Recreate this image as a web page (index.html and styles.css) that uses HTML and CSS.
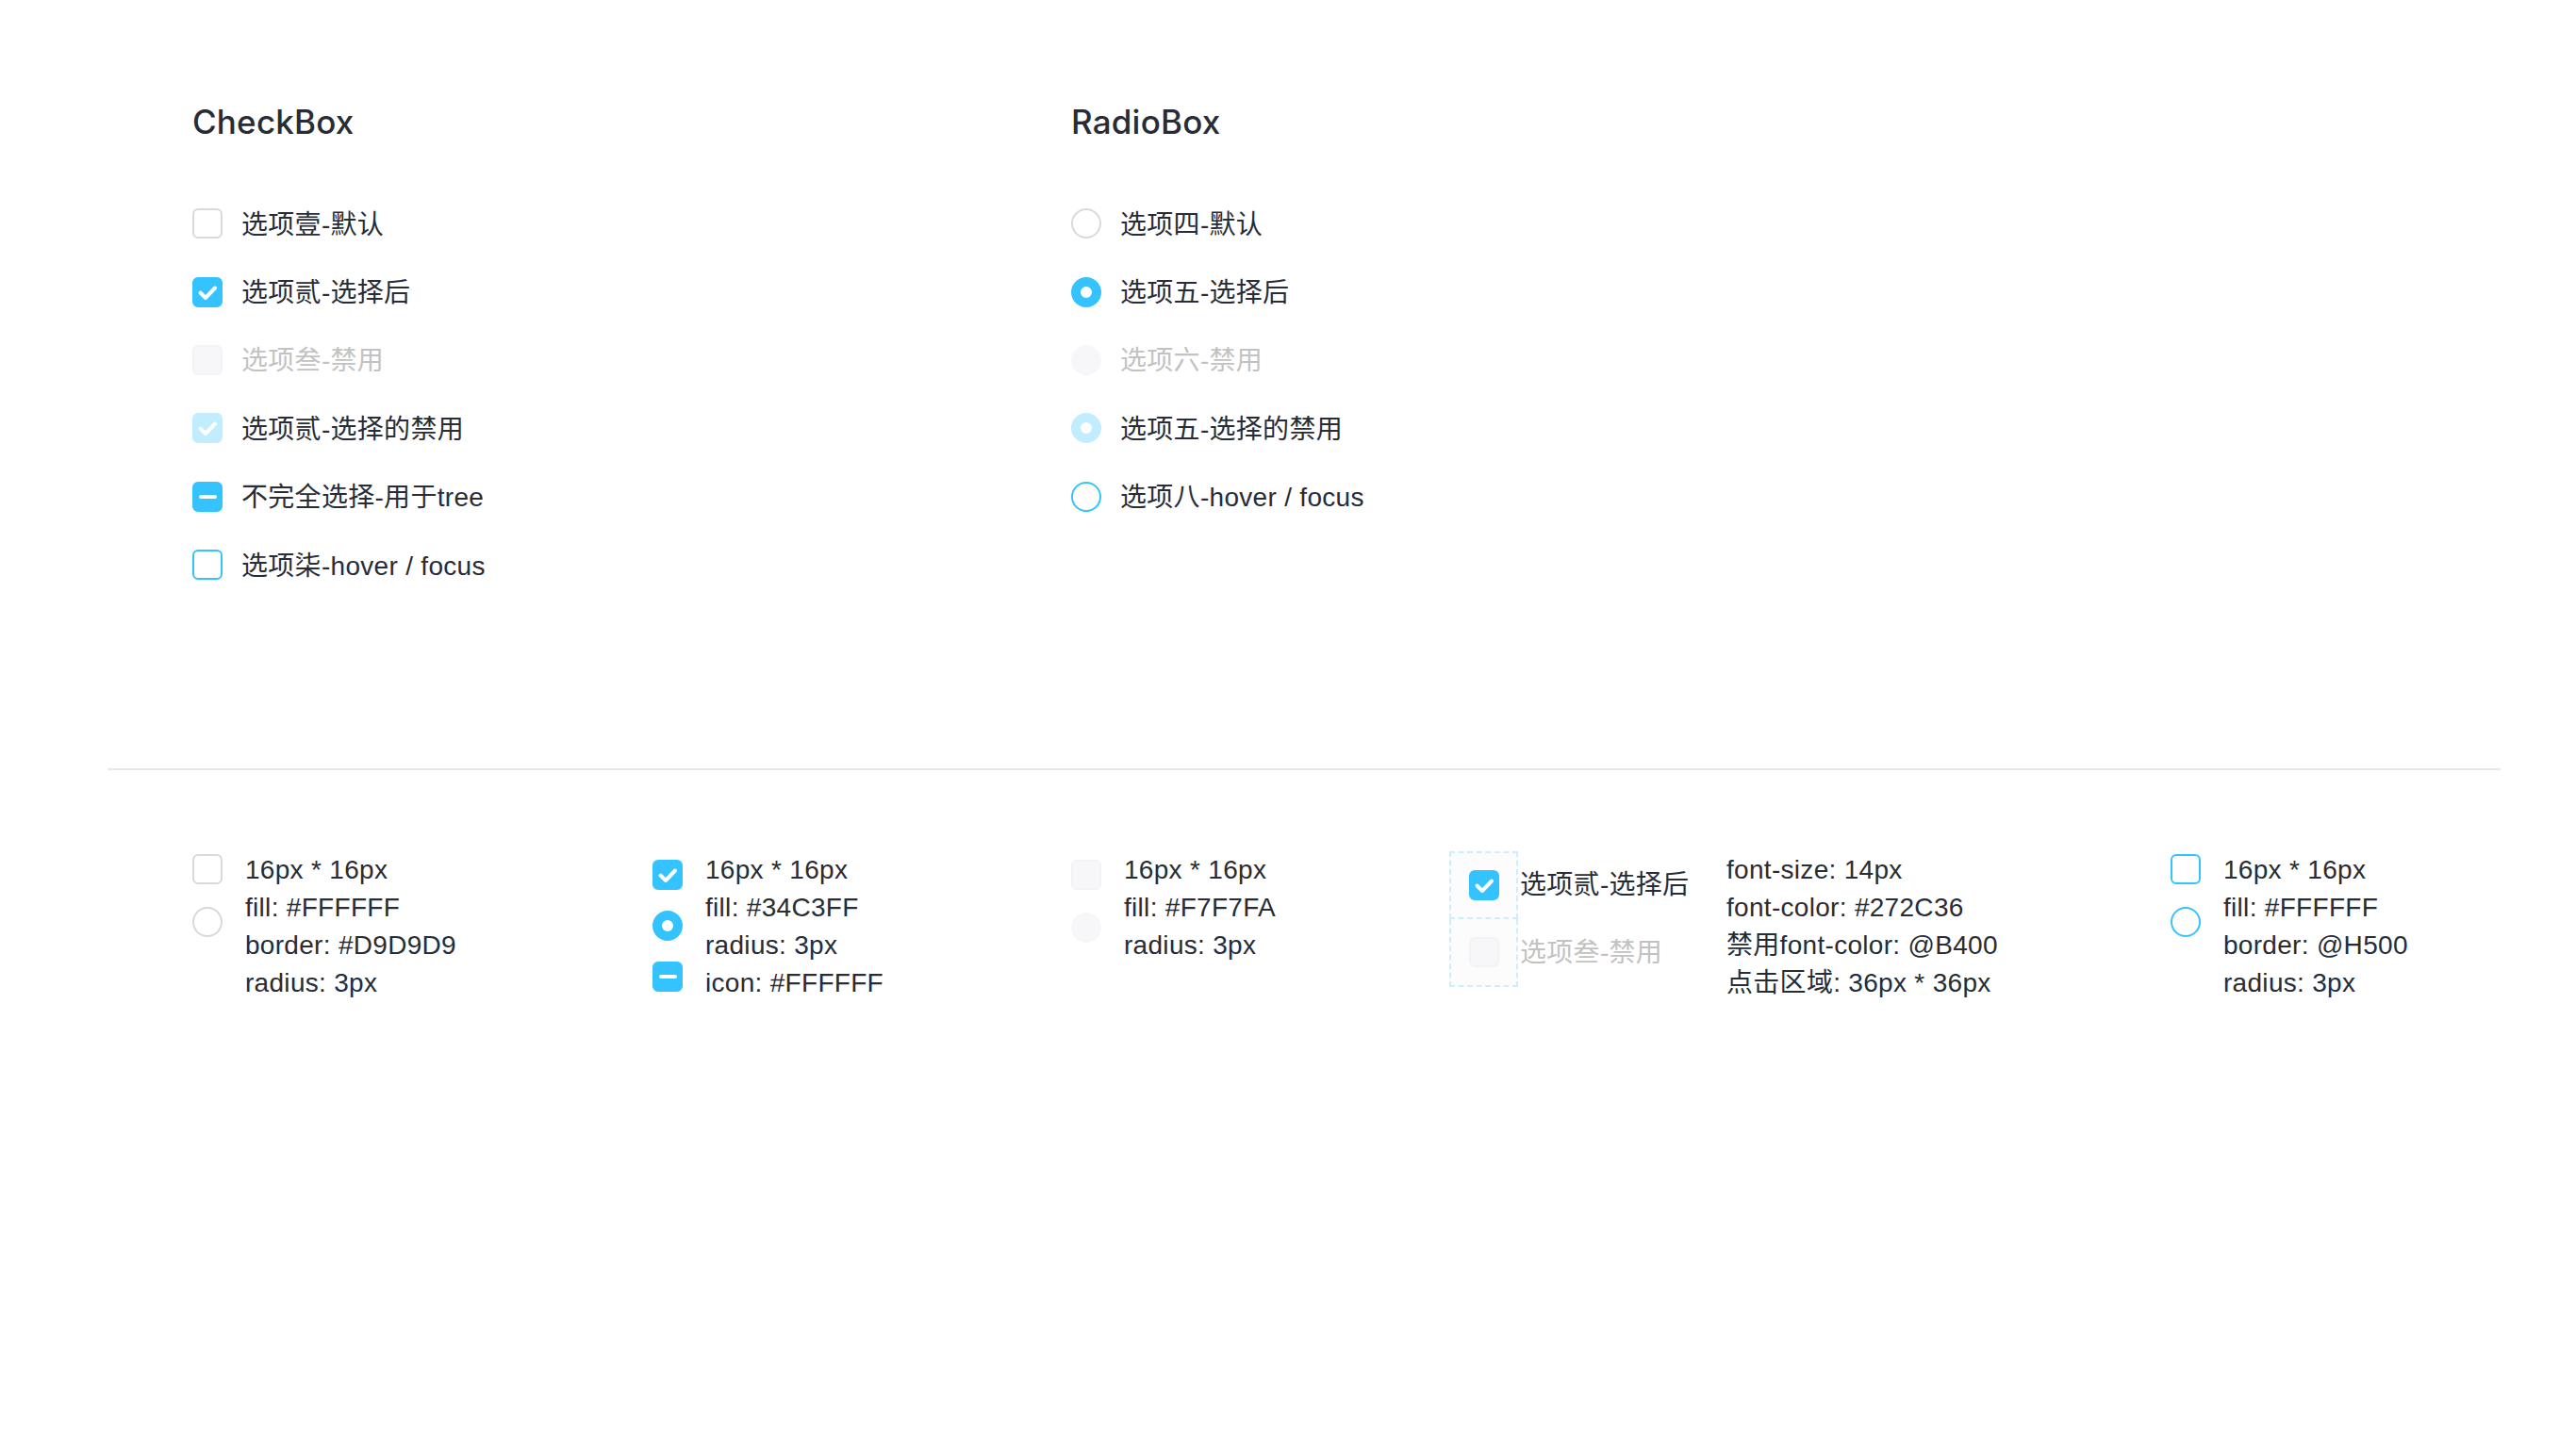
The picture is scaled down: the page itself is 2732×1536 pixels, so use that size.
FILE: index.html
```html
<!DOCTYPE html>
<html lang="zh-CN">
<head>
<meta charset="utf-8">
<title>CheckBox / RadioBox</title>
<link rel="stylesheet" href="styles.css">
</head>
<body>
<div class="page">
  <section class="demos">
    <div class="demo-col demo-col--check">
      <h2 class="title">CheckBox</h2>
      <ul class="options">
        <li class="option"><span class="cb"></span><span class="label">选项壹-默认</span></li>
        <li class="option"><span class="cb cb--checked"><svg class="tick" viewBox="0 0 32 32"><path d="M8.5 16.5 L14 22 L24 11.5"/></svg></span><span class="label">选项贰-选择后</span></li>
        <li class="option"><span class="cb cb--disabled"></span><span class="label label--disabled">选项叁-禁用</span></li>
        <li class="option"><span class="cb cb--checked-disabled"><svg class="tick" viewBox="0 0 32 32"><path d="M8.5 16.5 L14 22 L24 11.5"/></svg></span><span class="label">选项贰-选择的禁用</span></li>
        <li class="option"><span class="cb cb--checked"><span class="minus"></span></span><span class="label">不完全选择-用于tree</span></li>
        <li class="option"><span class="cb cb--hover"></span><span class="label">选项柒-hover / focus</span></li>
      </ul>
    </div>
    <div class="demo-col demo-col--radio">
      <h2 class="title">RadioBox</h2>
      <ul class="options">
        <li class="option"><span class="rd"></span><span class="label">选项四-默认</span></li>
        <li class="option"><span class="rd rd--checked"></span><span class="label">选项五-选择后</span></li>
        <li class="option"><span class="rd rd--disabled"></span><span class="label label--disabled">选项六-禁用</span></li>
        <li class="option"><span class="rd rd--checked-disabled"></span><span class="label">选项五-选择的禁用</span></li>
        <li class="option"><span class="rd rd--hover"></span><span class="label">选项八-hover / focus</span></li>
      </ul>
    </div>
  </section>

  <hr class="divider">

  <section class="specs">
    <div class="spec">
      <div class="spec-icons spec-icons--top">
        <span class="cb"></span>
        <span class="rd"></span>
      </div>
      <div class="spec-text">
        <p>16px * 16px</p>
        <p>fill: #FFFFFF</p>
        <p>border: #D9D9D9</p>
        <p>radius: 3px</p>
      </div>
    </div>
    <div class="spec">
      <div class="spec-icons spec-icons--low spec-icons--tight">
        <span class="cb cb--checked"><svg class="tick" viewBox="0 0 32 32"><path d="M8.5 16.5 L14 22 L24 11.5"/></svg></span>
        <span class="rd rd--checked"></span>
        <span class="cb cb--checked"><span class="minus"></span></span>
      </div>
      <div class="spec-text">
        <p>16px * 16px</p>
        <p>fill: #34C3FF</p>
        <p>radius: 3px</p>
        <p>icon: #FFFFFF</p>
      </div>
    </div>
    <div class="spec">
      <div class="spec-icons spec-icons--low">
        <span class="cb cb--disabled"></span>
        <span class="rd rd--disabled"></span>
      </div>
      <div class="spec-text">
        <p>16px * 16px</p>
        <p>fill: #F7F7FA</p>
        <p>radius: 3px</p>
      </div>
    </div>
    <div class="spec spec--type">
      <div class="hit-stack">
        <div class="hit-row">
          <span class="hit"><span class="cb cb--checked"><svg class="tick" viewBox="0 0 32 32"><path d="M8.5 16.5 L14 22 L24 11.5"/></svg></span></span>
          <span class="label">选项贰-选择后</span>
        </div>
        <div class="hit-row">
          <span class="hit hit--next"><span class="cb cb--disabled"></span></span>
          <span class="label label--disabled">选项叁-禁用</span>
        </div>
      </div>
      <div class="spec-text">
        <p>font-size: 14px</p>
        <p>font-color: #272C36</p>
        <p>禁用font-color: @B400</p>
        <p>点击区域: 36px * 36px</p>
      </div>
    </div>
    <div class="spec">
      <div class="spec-icons spec-icons--top">
        <span class="cb cb--hover"></span>
        <span class="rd rd--hover"></span>
      </div>
      <div class="spec-text">
        <p>16px * 16px</p>
        <p>fill: #FFFFFF</p>
        <p>border: @H500</p>
        <p>radius: 3px</p>
      </div>
    </div>
  </section>
</div>
</body>
</html>
```

FILE: styles.css
```css
* { box-sizing: border-box; }

html, body {
  margin: 0;
  padding: 0;
  background: #ffffff;
}

body {
  font-family: "Liberation Sans", "Noto Sans CJK SC", sans-serif;
  color: #272C36;
  font-size: 28px;
}

.page {
  padding-top: 105px;
}

/* ---------- top demos ---------- */
.demos {
  display: flex;
  padding-left: 204px;
}

.demo-col--check { width: 932px; }
.demo-col--radio { flex: 1; }

.title {
  margin: 0 0 48px 0;
  font-family: "Inter", "Liberation Sans", sans-serif;
  font-weight: 500;
  font-size: 35px;
  line-height: 48px;
  color: #272C36;
  letter-spacing: 0.2px;
}

.options {
  list-style: none;
  margin: 0;
  padding: 0;
}

.option {
  display: flex;
  align-items: center;
  height: 72.4px;
  gap: 20px;
}

.label {
  font-size: 28px;
  line-height: 40px;
  color: #272C36;
  white-space: nowrap;
  letter-spacing: 0.3px;
}

.options .label { padding-top: 3px; }

.label--disabled { color: #C2C2C2; }

/* ---------- checkbox ---------- */
.cb {
  flex: none;
  position: relative;
  display: flex;
  align-items: center;
  justify-content: center;
  width: 32px;
  height: 32px;
  border-radius: 6px;
  border: 2px solid #D9D9D9;
  background: #ffffff;
}

.cb--checked {
  background: #34C3FF;
  border-color: #34C3FF;
}

.cb--checked-disabled {
  background: #C2EDFF;
  border-color: #C2EDFF;
}

.cb--disabled {
  background: #F7F7FA;
  border-color: #F3F3F6;
}

.cb--hover {
  border-color: #34C3FF;
}

.tick {
  position: absolute;
  left: -2px;
  top: -2px;
  width: 32px;
  height: 32px;
}

.tick path {
  fill: none;
  stroke: #ffffff;
  stroke-width: 4;
  stroke-linecap: round;
  stroke-linejoin: round;
}

.minus {
  display: block;
  width: 19px;
  height: 4px;
  border-radius: 2px;
  background: #ffffff;
}

/* ---------- radio ---------- */
.rd {
  flex: none;
  display: block;
  width: 32px;
  height: 32px;
  border-radius: 50%;
  border: 2px solid #D9D9D9;
  background: #ffffff;
}

.rd--checked {
  border: 10px solid #34C3FF;
}

.rd--checked-disabled {
  border: 10px solid #C2EDFF;
}

.rd--disabled {
  background: #F7F7FA;
  border-color: #F7F7FA;
}

.rd--hover {
  border-color: #34C3FF;
}

/* ---------- divider ---------- */
.divider {
  height: 2px;
  border: 0;
  background: #E6E6EB;
  margin: 180px 80px 0 114px;
}

/* ---------- specs ---------- */
.specs {
  display: grid;
  grid-template-columns: 488px 444px 401px 765px auto;
  padding-left: 204px;
  margin-top: 86px;
}

.spec {
  display: flex;
  gap: 24px;
  align-items: flex-start;
}

.spec-icons {
  display: flex;
  flex-direction: column;
  gap: 24px;
}

.spec-icons--top { padding-top: 3px; }
.spec-icons--low { padding-top: 9px; }
.spec-icons--tight { gap: 22px; }

.spec-text p {
  margin: 0;
  font-size: 28px;
  line-height: 40px;
  white-space: nowrap;
  letter-spacing: 0.3px;
}

.spec--type { gap: 0; }

.hit-stack {
  width: 294px;
  display: flex;
  flex-direction: column;
}

.hit-row {
  display: flex;
  align-items: center;
  gap: 2px;
}

.hit {
  display: flex;
  align-items: center;
  justify-content: center;
  width: 73px;
  height: 72px;
  border: 2px dashed #CDEFFD;
  background: #FCFCFD;
}

.hit--next {
  border-top: 0;
  height: 72px;
}
```
